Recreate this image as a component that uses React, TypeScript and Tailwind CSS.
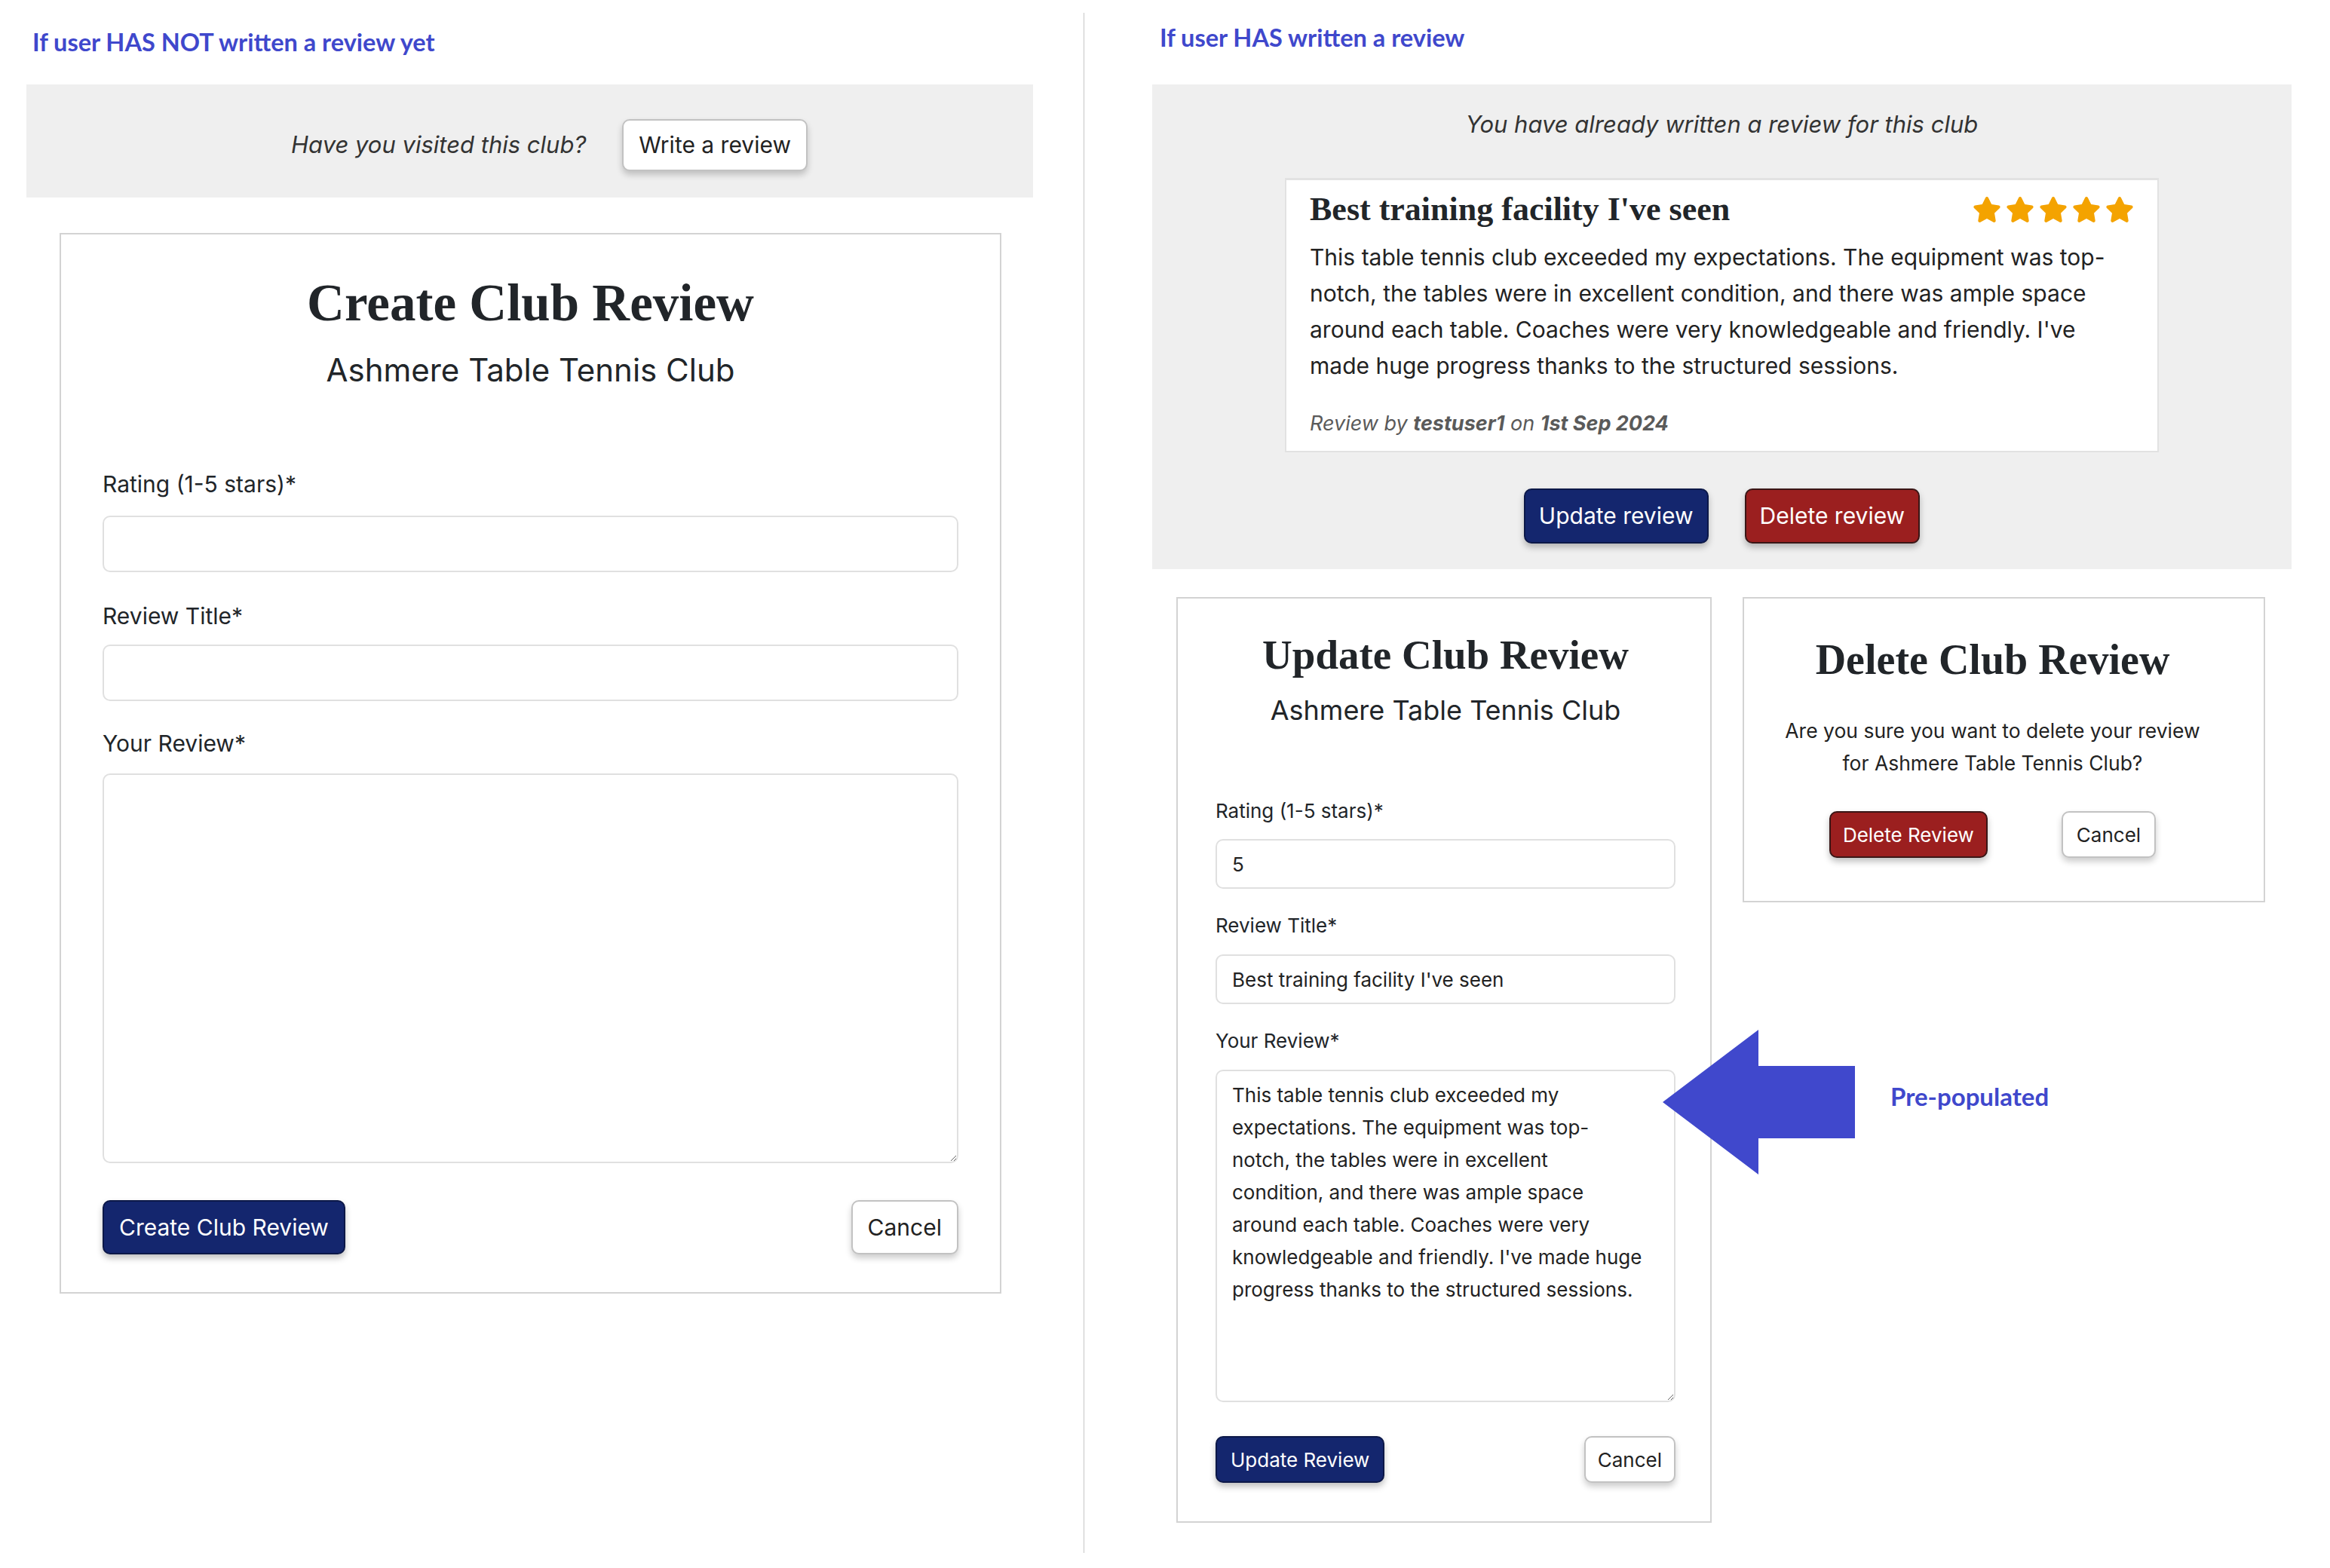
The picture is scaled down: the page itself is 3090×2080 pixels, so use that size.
import React from "react";
import { FaStar } from "react-icons/fa";

const sans = "font-['Inter','Noto_Sans',sans-serif]";
const serif = "font-['Liberation_Serif','DejaVu_Serif',serif]";
const note = "font-['Lato','Noto_Sans',sans-serif] font-bold text-[#3f48cc]";

const navyBtn =
  "bg-[#14266e] border-2 border-[#0c1848] text-white rounded-[10px] shadow-[0_5px_8px_rgba(0,0,0,0.25)]";
const redBtn =
  "bg-[#9b1f1f] border-2 border-[#3a1616] text-white rounded-[10px] shadow-[0_5px_8px_rgba(0,0,0,0.25)]";
const whiteBtn =
  "bg-white border-2 border-[#c2c2c2] text-[#222] rounded-[10px] shadow-[0_5px_8px_rgba(0,0,0,0.2)]";
const field = "w-full bg-white border-2 border-[#e0e0e0] rounded-[10px] outline-none text-[#222]";

const reviewLines = [
  "This table tennis club exceeded my expectations. The equipment was top-",
  "notch, the tables were in excellent condition, and there was ample space",
  "around each table. Coaches were very knowledgeable and friendly. I've",
  "made huge progress thanks to the structured sessions.",
];

const textareaValue = [
  "This table tennis club exceeded my",
  "expectations. The equipment was top-",
  "notch, the tables were in excellent",
  "condition, and there was ample space",
  "around each table. Coaches were very",
  "knowledgeable and friendly. I've made huge",
  "progress thanks to the structured sessions.",
].join("\n");

export default function App() {
  return (
    <div className={`flex w-[3090px] h-[2080px] bg-white ${sans} text-[#212529]`}>
      {/* no review yet */}
      <div className="w-[1370px] shrink-0 pl-[35px] flex flex-col">
        <div className={`h-[112px] flex items-center pl-2 text-[32.5px] ${note}`}>
          If user HAS NOT written a review yet
        </div>
        <div className="h-[150px] bg-[#efefef] flex items-center justify-center gap-[48px] pl-[52px] pt-[10px]">
          <p className="italic text-[31px] text-[#333]">Have you visited this club?</p>
          <button className={`h-[69px] px-[20px] text-[30px] ${whiteBtn}`}>Write a review</button>
        </div>

        <div className="ml-[44px] mt-[47px] w-[1249px] border-2 border-[#d3d3d3] px-[55px] pt-[51px] pb-[50px] flex flex-col">
          <h1 className={`text-center font-bold text-[69px] leading-[80px] ${serif}`}>Create Club Review</h1>
          <h2 className="mt-[24px] text-center text-[42px] leading-[50px]">Ashmere Table Tennis Club</h2>
          <label className="mt-[108px] text-[30px] leading-[36px]">Rating (1-5 stars)*</label>
          <input className={`mt-[24px] h-[75px] ${field}`} />
          <label className="mt-[40px] text-[30px] leading-[36px]">Review Title*</label>
          <input className={`mt-[20px] h-[75px] ${field}`} />
          <label className="mt-[38px] text-[30px] leading-[36px]">Your Review*</label>
          <textarea className={`mt-[22px] h-[517px] ${field}`} />
          <div className="mt-[49px] flex justify-between">
            <button className={`h-[72px] px-[20px] text-[30px] ${navyBtn}`}>Create Club Review</button>
            <button className={`h-[72px] px-[20px] text-[30px] ${whiteBtn}`}>Cancel</button>
          </div>
        </div>
      </div>

      <div className="w-px bg-[#c6c6c6] ml-[67px] mt-[17px] mb-[20px] shrink-0" />

      {/* review exists */}
      <div className="ml-[90px] w-[1511px] shrink-0 flex flex-col">
        <div className={`h-[112px] flex items-center pb-[12px] pl-[10px] text-[32.5px] ${note}`}>
          If user HAS written a review
        </div>
        <div className="bg-[#efefef] pt-[35px] pb-[34px] flex flex-col items-center">
          <p className="italic text-[31px] leading-[36px] text-[#333]">
            You have already written a review for this club
          </p>
          <div className="mt-[53px] w-[1159px] bg-white border-2 border-t-[3px] border-[#e2e2e2] px-[31px] pt-[14px] pb-[18px]">
            <div className="flex items-center justify-between h-[50px]">
              <h3 className={`font-bold text-[44px] leading-[50px] ${serif}`}>Best training facility I've seen</h3>
              <div className="flex gap-[6px] text-[#f4a300]">
                <FaStar size={38} />
                <FaStar size={38} />
                <FaStar size={38} />
                <FaStar size={38} />
                <FaStar size={38} />
              </div>
            </div>
            <div className="mt-[14px] text-[30px] leading-[48px] text-[#222]">
              {reviewLines.map((l) => (
                <p key={l} className="whitespace-nowrap">{l}</p>
              ))}
            </div>
            <p className="mt-[35px] italic text-[27px] leading-[36px] text-[#5a5a5a]">
              Review by <b>testuser1</b> on <b>1st Sep 2024</b>
            </p>
          </div>
          <div className="mt-[48px] flex gap-[48px]">
            <button className={`h-[73px] px-[18px] text-[30px] ${navyBtn}`}>Update review</button>
            <button className={`h-[73px] px-[18px] text-[30px] ${redBtn}`}>Delete review</button>
          </div>
        </div>

        <div className="flex items-start mt-[37px] ml-[32px]">
          <div className="w-[710px] shrink-0 border-2 border-[#d3d3d3] pl-[50px] pr-[46px] pt-[42px] pb-[51px] flex flex-col bg-white">
            <h1 className={`text-center font-bold text-[55px] leading-[66px] ${serif}`}>Update Club Review</h1>
            <h2 className="mt-[18px] text-center text-[36px] leading-[44px]">Ashmere Table Tennis Club</h2>
            <label className="mt-[96px] text-[26px] leading-[32px]">Rating (1-5 stars)*</label>
            <input className={`mt-[21px] h-[66px] px-[20px] text-[26px] ${field}`} defaultValue="5" />
            <label className="mt-[33px] text-[26px] leading-[32px]">Review Title*</label>
            <input
              className={`mt-[22px] h-[66px] px-[20px] text-[26px] ${field}`}
              defaultValue="Best training facility I've seen"
            />
            <label className="mt-[33px] text-[26px] leading-[32px]">Your Review*</label>
            <textarea
              className={`mt-[22px] h-[441px] px-[20px] pt-[10px] text-[26px] leading-[43px] ${field}`}
              defaultValue={textareaValue}
            />
            <div className="mt-[45px] flex justify-between">
              <button className={`h-[62px] px-[18px] text-[26px] ${navyBtn}`}>Update Review</button>
              <button className={`h-[62px] px-[16px] text-[26px] ${whiteBtn}`}>Cancel</button>
            </div>
          </div>

          <div className="ml-[41px] w-[693px] shrink-0 flex flex-col">
            <div className="border-2 border-[#d3d3d3] pl-[20px] pr-[50px] pt-[48px] pb-[57px] flex flex-col items-center">
              <h1 className={`font-bold text-[56px] leading-[66px] ${serif}`}>Delete Club Review</h1>
              <p className="mt-[40px] text-center text-[26.5px] leading-[43px] text-[#222]">
                Are you sure you want to delete your review
                <br />
                for Ashmere Table Tennis Club?
              </p>
              <div className="mt-[42px] flex gap-[98px]">
                <button className={`h-[62px] px-[16px] text-[26px] ${redBtn}`}>Delete Review</button>
                <button className={`h-[62px] px-[18px] text-[26px] ${whiteBtn}`}>Cancel</button>
              </div>
            </div>

            <div className="mt-[169px] -ml-[106px] flex items-center gap-[47px]">
              <svg width="255" height="192" viewBox="0 0 255 192" className="shrink-0">
                <polygon points="0,96 127,0 127,48 255,48 255,144 127,144 127,192" fill="#4048cc" />
              </svg>
              <span className={`text-[33px] -mt-[14px] ${note}`}>Pre-populated</span>
            </div>
          </div>
        </div>
      </div>
    </div>
  );
}
